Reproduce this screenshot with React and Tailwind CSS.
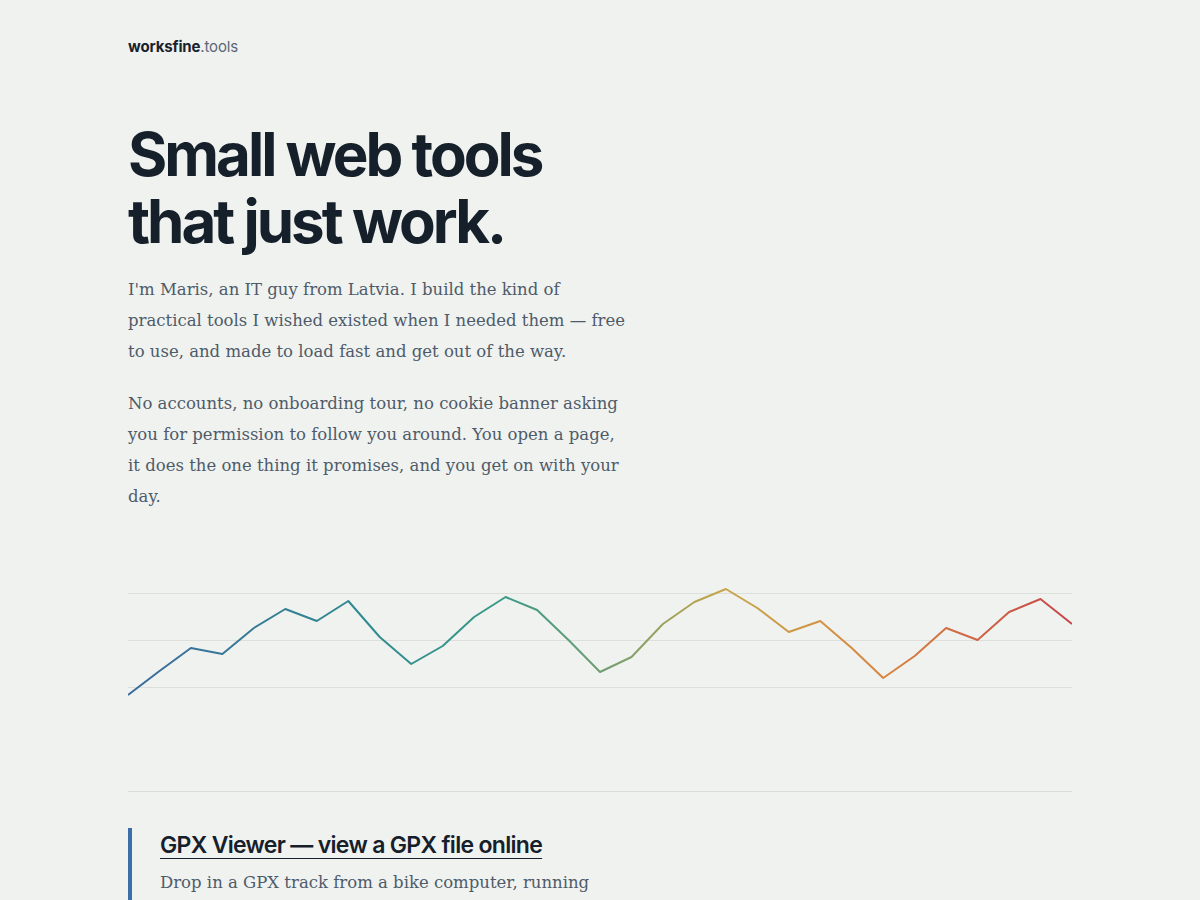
import React from "react";

const points = [
  695, 671, 648, 654, 628, 609, 621, 601, 637, 664, 646, 617, 597, 610, 640,
  672, 657, 624, 602, 589, 608, 632, 621, 648, 678, 656, 628, 640, 612, 599, 624,
];

const ElevationChart = () => {
  const width = 944;
  const step = width / (points.length - 1);
  const top = 580;
  const d = points
    .map((y, i) => `${i === 0 ? "M" : "L"}${(i * step).toFixed(1)},${y - top}`)
    .join(" ");

  return (
    <svg width={width} height="140" viewBox="0 0 944 140" className="block">
      <defs>
        <linearGradient id="track" x1="0" y1="0" x2="944" y2="0" gradientUnits="userSpaceOnUse">
          <stop offset="0" stopColor="#3c6a9e" />
          <stop offset="0.25" stopColor="#2f8a90" />
          <stop offset="0.4" stopColor="#3a9a86" />
          <stop offset="0.5" stopColor="#6e9e72" />
          <stop offset="0.63" stopColor="#c6a64c" />
          <stop offset="0.8" stopColor="#d8853e" />
          <stop offset="1" stopColor="#c6454c" />
        </linearGradient>
      </defs>
      <line x1="0" y1="13.5" x2="944" y2="13.5" stroke="#dcdfdc" strokeWidth="1" />
      <line x1="0" y1="60.5" x2="944" y2="60.5" stroke="#dcdfdc" strokeWidth="1" />
      <line x1="0" y1="107.5" x2="944" y2="107.5" stroke="#dcdfdc" strokeWidth="1" />
      <path d={d} fill="none" stroke="url(#track)" strokeWidth="2" strokeLinejoin="round" />
    </svg>
  );
};

export default function App() {
  const serif = "font-['DejaVu_Serif','Liberation_Serif',serif]";
  return (
    <div className="h-[900px] overflow-hidden bg-[#f0f2ef] font-['Inter',sans-serif]">
      <div className="mx-auto w-[944px] pt-[37px]">
        <header className="text-[15px] leading-[20px] tracking-[-0.01em]">
          <span className="font-bold text-[#18212c]">worksfine</span>
          <span className="text-[#5b6776]">.tools</span>
        </header>

        <section className="mt-[64px]">
          <h1 className="text-[60px] leading-[67px] font-bold tracking-[-0.05em] text-[#15202b]">
            Small web tools
            <br />
            that just work.
          </h1>

          <div className={`${serif} mt-[19px] w-[502px] text-[16.5px] leading-[31px] text-[#4e5b6a]`}>
            <p>
              I'm Maris, an IT guy from Latvia. I build the kind of practical tools I
              wished existed when I needed them — free to use, and made to load fast
              and get out of the way.
            </p>
            <p className="mt-[21px]">
              No accounts, no onboarding tour, no cookie banner asking you for
              permission to follow you around. You open a page, it does the one thing
              it promises, and you get on with your day.
            </p>
          </div>
        </section>

        <div className="mt-[68px]">
          <ElevationChart />
        </div>

        <div className="mt-[71px] border-t border-[#d9dcd9]" />

        <div className="mt-[36px] border-l-4 border-[#3c6ea8] pl-[28px] pt-[2px]">
          <a
            href="#"
            className="text-[23px] leading-[30px] font-semibold tracking-[-0.03em] text-[#15202b] underline decoration-1 underline-offset-[5px]"
          >
            GPX Viewer — view a GPX file online
          </a>
          <p className={`${serif} mt-[7px] w-[462px] text-[16.5px] leading-[31px] text-[#4e5b6a]`}>
            Drop in a GPX track from a bike computer, running watch or phone app and
            see it on a map with elevation and stats.
          </p>
        </div>
      </div>
    </div>
  );
}
